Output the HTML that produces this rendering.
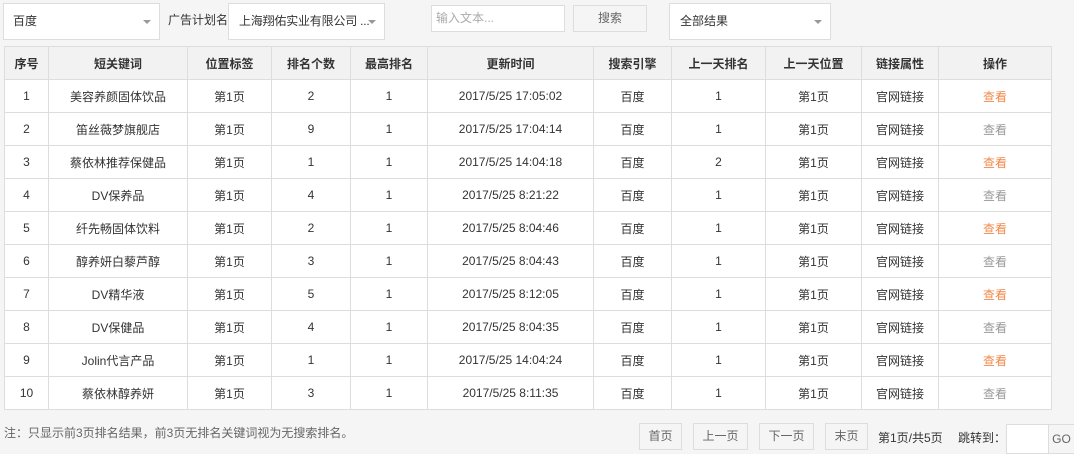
<!DOCTYPE html>
<html><head><meta charset="utf-8"><style>
*{box-sizing:border-box;margin:0;padding:0}
body{width:1074px;height:454px;background:#f5f5f5;font-family:"Liberation Sans","Noto Sans CJK SC",sans-serif;font-size:12px;color:#333;position:relative;overflow:hidden}
.a{position:absolute}
.sel{background:#fff;border:1px solid #ddd;height:37px;line-height:35px;padding-left:9px;font-size:12px;color:#333;white-space:nowrap;overflow:hidden}
.sel:after{content:"";position:absolute;right:8px;top:16px;border-left:4px solid transparent;border-right:4px solid transparent;border-top:4px solid #999}
table{position:absolute;left:4px;top:46px;border-collapse:collapse;table-layout:fixed;background:#fff}
td,th{border:1px solid #ddd;height:33px;text-align:center;font-size:12px;font-weight:normal;color:#333;white-space:nowrap;overflow:hidden}
th{background:#f2f2f2;font-weight:bold}
.o{color:#f08a4b}.g{color:#999}
.btn{position:absolute;top:423px;height:27px;line-height:25px;border:1px solid #ddd;background:#f5f5f5;color:#666;text-align:center}
</style></head><body>
<div class="a sel" style="left:3px;top:3px;width:157px">百度</div>
<div class="a" style="left:168px;top:11px;width:70px;overflow:hidden;white-space:nowrap;color:#333">广告计划名称</div>
<div class="a sel" style="left:228px;top:3px;width:157px;padding-left:10px"><span style="letter-spacing:-0.2px">上海翔佑实业有限公司 ...</span></div>
<div class="a" style="left:431px;top:5px;width:134px;height:27px;background:#fff;border:1px solid #ddd;color:#aaa;line-height:24px;padding-left:4px">输入文本...</div>
<div class="a" style="left:573px;top:5px;width:74px;height:27px;border:1px solid #ddd;background:#f5f5f5;color:#666;text-align:center;line-height:25px">搜索</div>
<div class="a sel" style="left:669px;top:3px;width:162px;padding-left:10px">全部结果</div>
<table>
<colgroup><col style="width:44px"><col style="width:139px"><col style="width:84px"><col style="width:79px"><col style="width:77px"><col style="width:166px"><col style="width:78px"><col style="width:94px"><col style="width:96px"><col style="width:77px"><col style="width:113px"></colgroup>
<tr><th>序号</th><th>短关键词</th><th>位置标签</th><th>排名个数</th><th>最高排名</th><th>更新时间</th><th>搜索引擎</th><th>上一天排名</th><th>上一天位置</th><th>链接属性</th><th>操作</th></tr>
<tr><td>1</td><td>美容养颜固体饮品</td><td>第1页</td><td>2</td><td>1</td><td>2017/5/25 17:05:02</td><td>百度</td><td>1</td><td>第1页</td><td>官网链接</td><td class="o">查看</td></tr>
<tr><td>2</td><td>笛丝薇梦旗舰店</td><td>第1页</td><td>9</td><td>1</td><td>2017/5/25 17:04:14</td><td>百度</td><td>1</td><td>第1页</td><td>官网链接</td><td class="g">查看</td></tr>
<tr><td>3</td><td>蔡依林推荐保健品</td><td>第1页</td><td>1</td><td>1</td><td>2017/5/25 14:04:18</td><td>百度</td><td>2</td><td>第1页</td><td>官网链接</td><td class="o">查看</td></tr>
<tr><td>4</td><td>DV保养品</td><td>第1页</td><td>4</td><td>1</td><td>2017/5/25 8:21:22</td><td>百度</td><td>1</td><td>第1页</td><td>官网链接</td><td class="g">查看</td></tr>
<tr><td>5</td><td>纤先畅固体饮料</td><td>第1页</td><td>2</td><td>1</td><td>2017/5/25 8:04:46</td><td>百度</td><td>1</td><td>第1页</td><td>官网链接</td><td class="o">查看</td></tr>
<tr><td>6</td><td>醇养妍白藜芦醇</td><td>第1页</td><td>3</td><td>1</td><td>2017/5/25 8:04:43</td><td>百度</td><td>1</td><td>第1页</td><td>官网链接</td><td class="g">查看</td></tr>
<tr><td>7</td><td>DV精华液</td><td>第1页</td><td>5</td><td>1</td><td>2017/5/25 8:12:05</td><td>百度</td><td>1</td><td>第1页</td><td>官网链接</td><td class="o">查看</td></tr>
<tr><td>8</td><td>DV保健品</td><td>第1页</td><td>4</td><td>1</td><td>2017/5/25 8:04:35</td><td>百度</td><td>1</td><td>第1页</td><td>官网链接</td><td class="g">查看</td></tr>
<tr><td>9</td><td>Jolin代言产品</td><td>第1页</td><td>1</td><td>1</td><td>2017/5/25 14:04:24</td><td>百度</td><td>1</td><td>第1页</td><td>官网链接</td><td class="o">查看</td></tr>
<tr><td>10</td><td>蔡依林醇养妍</td><td>第1页</td><td>3</td><td>1</td><td>2017/5/25 8:11:35</td><td>百度</td><td>1</td><td>第1页</td><td>官网链接</td><td class="g">查看</td></tr>
</table>
<div class="a" style="left:4px;top:424px;color:#666">注：只显示前3页排名结果，前3页无排名关键词视为无搜索排名。</div>
<div class="btn" style="left:639px;width:43px">首页</div>
<div class="btn" style="left:693px;width:55px">上一页</div>
<div class="btn" style="left:759px;width:55px">下一页</div>
<div class="btn" style="left:825px;width:43px">末页</div>
<div class="a" style="left:878px;top:429px;color:#333">第1页/共5页</div>
<div class="a" style="left:958px;top:429px;color:#333">跳转到：</div>
<div class="a" style="left:1006px;top:424px;width:43px;height:30px;background:#fff;border:1px solid #ddd"></div>
<div class="a" style="left:1048px;top:424px;width:26px;height:30px;border:1px solid #ddd;border-right:none;background:#f5f5f5;color:#666;line-height:28px;text-align:center">GO</div>
</body></html>
